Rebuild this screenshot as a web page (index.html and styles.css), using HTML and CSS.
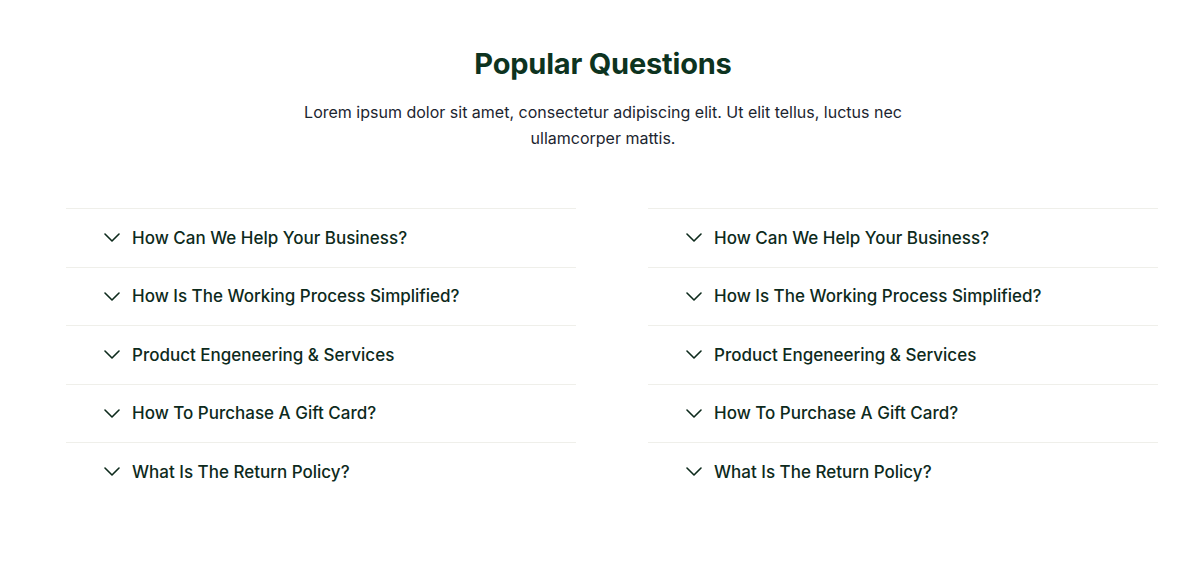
FILE: index.html
```html
<!DOCTYPE html>
<html lang="en">
<head>
<meta charset="utf-8">
<title>Popular Questions</title>
<link rel="stylesheet" href="styles.css">
</head>
<body>
<section class="faq">
  <header class="faq-head">
    <h2 class="faq-title">Popular Questions</h2>
    <p class="faq-lead">Lorem ipsum dolor sit amet, consectetur adipiscing elit. Ut elit tellus, luctus nec ullamcorper mattis.</p>
  </header>
  <div class="faq-grid">
    <ul class="faq-list">
      <li class="faq-item"><svg class="chev" viewBox="0 0 16 9"><path d="M1 1l7 7 7-7"/></svg><span>How Can We Help Your Business?</span></li>
      <li class="faq-item"><svg class="chev" viewBox="0 0 16 9"><path d="M1 1l7 7 7-7"/></svg><span>How Is The Working Process Simplified?</span></li>
      <li class="faq-item"><svg class="chev" viewBox="0 0 16 9"><path d="M1 1l7 7 7-7"/></svg><span>Product Engeneering &amp; Services</span></li>
      <li class="faq-item"><svg class="chev" viewBox="0 0 16 9"><path d="M1 1l7 7 7-7"/></svg><span>How To Purchase A Gift Card?</span></li>
      <li class="faq-item"><svg class="chev" viewBox="0 0 16 9"><path d="M1 1l7 7 7-7"/></svg><span>What Is The Return Policy?</span></li>
    </ul>
    <ul class="faq-list">
      <li class="faq-item"><svg class="chev" viewBox="0 0 16 9"><path d="M1 1l7 7 7-7"/></svg><span>How Can We Help Your Business?</span></li>
      <li class="faq-item"><svg class="chev" viewBox="0 0 16 9"><path d="M1 1l7 7 7-7"/></svg><span>How Is The Working Process Simplified?</span></li>
      <li class="faq-item"><svg class="chev" viewBox="0 0 16 9"><path d="M1 1l7 7 7-7"/></svg><span>Product Engeneering &amp; Services</span></li>
      <li class="faq-item"><svg class="chev" viewBox="0 0 16 9"><path d="M1 1l7 7 7-7"/></svg><span>How To Purchase A Gift Card?</span></li>
      <li class="faq-item"><svg class="chev" viewBox="0 0 16 9"><path d="M1 1l7 7 7-7"/></svg><span>What Is The Return Policy?</span></li>
    </ul>
  </div>
</section>
</body>
</html>
```
FILE: styles.css
```css
* { box-sizing: border-box; }
html, body { margin: 0; padding: 0; background: #fff; }
body { font-family: Inter, "Liberation Sans", sans-serif; }

.faq { padding-top: 44px; }

.faq-head {
  display: flex;
  flex-direction: column;
  align-items: center;
  padding-left: 6px;
}
.faq-title {
  margin: 0;
  font-size: 29px;
  line-height: 40px;
  font-weight: 700;
  color: #0d3320;
  letter-spacing: -0.2px;
}
.faq-lead {
  margin: 15px 0 0;
  width: 620px;
  text-align: center;
  font-size: 16px;
  line-height: 26px;
  color: #1c2530;
}

.faq-grid {
  display: grid;
  grid-template-columns: 510px 510px;
  column-gap: 72px;
  padding-left: 66px;
  margin-top: 57px;
}
.faq-list {
  list-style: none;
  margin: 0;
  padding: 0;
}
.faq-item {
  display: flex;
  align-items: center;
  height: 58.5px;
  padding-left: 38px;
  border-top: 1px solid #efefea;
  font-size: 17px;
  font-weight: 500;
  color: #0d2a1c;
}
.chev {
  width: 16px;
  height: 9px;
  margin-right: 12px;
  fill: none;
  stroke: #0d2a1c;
  stroke-width: 1.6;
  stroke-linecap: round;
  stroke-linejoin: round;
}
```
